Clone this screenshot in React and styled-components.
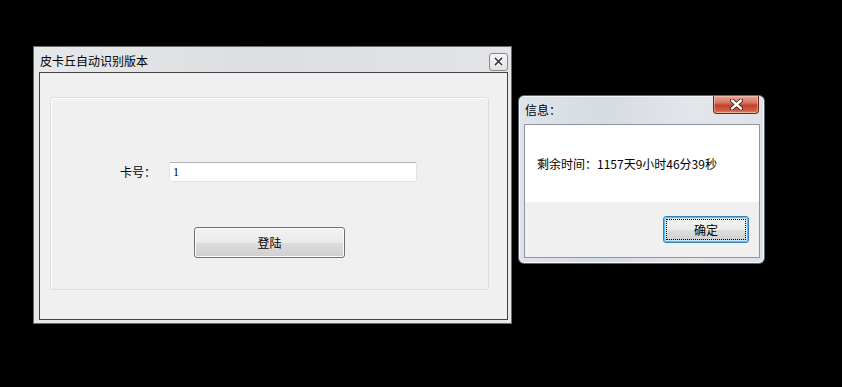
import React from "react";
import styled, { createGlobalStyle } from "styled-components";

const Global = createGlobalStyle`
  html, body { margin: 0; padding: 0; background: #000; }
  body { font-family: "Noto Sans CJK SC", "Noto Sans", sans-serif; font-size: 12px; color: #000; }
`;

const Desktop = styled.div`
  position: relative;
  width: 842px;
  height: 387px;
  background: #000;
  overflow: hidden;
`;

/* ---------- main window ---------- */
const MainWindow = styled.div`
  position: absolute;
  left: ${(p) => p.$x}px;
  top: ${(p) => p.$y}px;
  width: 479px;
  height: 278px;
  box-sizing: border-box;
  display: flex;
  flex-direction: column;
  border: 1px solid #6c6c6c;
  background: linear-gradient(to bottom, #e4e6e9 0px, #e8e9eb 26px, #e9e9e9 100%);
  padding: 0 3px 3px 5px;
`;

const MainTitleBar = styled.div`
  height: 25px;
  display: flex;
  align-items: center;
  justify-content: space-between;
  padding: 2px 0 0 1px;
  box-sizing: border-box;
  background: linear-gradient(to right, #e6e8ea 0%, #dcdee1 45%, #e2e4e7 100%);
  margin: 0 -3px 0 -5px;
  padding-left: 6px;
  padding-right: 3px;
`;

const TitleText = styled.span`
  font-size: 12px;
  line-height: 16px;
  color: #000;
`;

const SmallClose = styled.div`
  width: 19px;
  height: 18px;
  box-sizing: border-box;
  border: 1px solid #8a8a8a;
  border-radius: 3px;
  background: linear-gradient(to bottom, #f5f5f5, #e4e4e4);
  display: flex;
  align-items: center;
  justify-content: center;
  margin-top: 2px;
`;

const MainClient = styled.div`
  flex: 1;
  border: 1px solid #444;
  background: #f0f0f0;
  padding: 24px 18px 29px 10px;
  display: flex;
`;

const GroupBox = styled.div`
  flex: 1;
  border: 1px solid #d6dfe7;
  border-radius: 3px;
  box-shadow: inset 1px 1px 0 #ffffff;
  padding: 64px 0 0 69px;
  display: flex;
  flex-direction: column;
`;

const FieldRow = styled.div`
  display: flex;
  align-items: center;
  height: 20px;
`;

const FieldLabel = styled.span`
  width: 49px;
  font-size: 12px;
  line-height: 16px;
`;

const TextInput = styled.div`
  width: 248px;
  height: 20px;
  box-sizing: border-box;
  background: #fff;
  border: 1px solid #dfe3e8;
  border-top-color: #abadb3;
  border-radius: 2px;
  padding-left: 3px;
  font-family: "Liberation Serif", serif;
  font-size: 12px;
  line-height: 18px;
`;

const PushButton = styled.div`
  width: 151px;
  height: 31px;
  margin: 45px 0 0 74px;
  box-sizing: border-box;
  border: 1px solid #707070;
  border-radius: 3px;
  background: linear-gradient(to bottom, #f2f2f2 0%, #ebebeb 50%, #dddddd 51%, #cfcfcf 100%);
  box-shadow: inset 0 0 0 1px #fcfcfc;
  display: flex;
  align-items: center;
  justify-content: center;
  font-size: 12px;
`;

/* ---------- message dialog ---------- */
const Dialog = styled.div`
  position: absolute;
  left: ${(p) => p.$x}px;
  top: ${(p) => p.$y}px;
  width: 247px;
  height: 169px;
  box-sizing: border-box;
  display: flex;
  flex-direction: column;
  border: 1px solid #5c6570;
  border-radius: 6px;
  background: linear-gradient(to right, #dfe4ea 0%, #d5dbe2 35%, #e2e6eb 70%, #dde2e8 100%);
  box-shadow: inset 0 0 0 1px #f4f6f8;
  padding: 0 4px 5px 5px;
`;

const DialogTitleBar = styled.div`
  height: 28px;
  display: flex;
  align-items: flex-start;
  justify-content: space-between;
  padding: 0 1px 0 1px;
`;

const DialogTitle = styled.span`
  padding-top: 6px;
  font-size: 12px;
  line-height: 16px;
`;

const RedClose = styled.div`
  width: 46px;
  height: 18px;
  box-sizing: border-box;
  border: 1px solid #6b2a20;
  border-top: none;
  border-radius: 0 0 4px 4px;
  background: linear-gradient(to bottom, #e7a595 0%, #d7755f 40%, #c2412b 55%, #cf5d47 85%, #e08c72 100%);
  box-shadow: inset 0 0 0 1px rgba(255, 220, 210, 0.45);
  display: flex;
  align-items: center;
  justify-content: center;
`;

const DialogClient = styled.div`
  flex: 1;
  border: 1px solid #8d949c;
  display: flex;
  flex-direction: column;
  background: #f0f0f0;
`;

const MessageArea = styled.div`
  height: 77px;
  background: #fff;
  display: flex;
  align-items: center;
  padding-left: 12px;
  font-size: 12px;
`;

const ButtonArea = styled.div`
  flex: 1;
  display: flex;
  align-items: center;
  justify-content: flex-end;
  padding-right: 10px;
`;

const DefaultButton = styled.div`
  position: relative;
  width: 86px;
  height: 27px;
  box-sizing: border-box;
  border: 1px solid #3c7fb1;
  border-radius: 3px;
  background: linear-gradient(to bottom, #eaf6fd 0%, #d9f0fc 50%, #d6d6d6 51%, #cdcdcd 100%);
  background: linear-gradient(to bottom, #f2f2f2 0%, #ebebeb 50%, #dddddd 51%, #cfcfcf 100%);
  box-shadow: inset 0 0 0 1px #48c6f5, inset 0 0 0 2px #c4e8fa;
  display: flex;
  align-items: center;
  justify-content: center;
  font-size: 12px;

  &::after {
    content: "";
    position: absolute;
    inset: 2px;
    border: 1px dotted #000;
  }
`;

const SmallX = () => (
  <svg width="9" height="9" viewBox="0 0 9 9">
    <path d="M1.5 1.5 L7.5 7.5 M7.5 1.5 L1.5 7.5" stroke="#fff" strokeWidth="3.4" strokeLinecap="square" />
    <path d="M1.5 1.5 L7.5 7.5 M7.5 1.5 L1.5 7.5" stroke="#3a3a3a" strokeWidth="1.6" strokeLinecap="square" />
  </svg>
);

const BigX = () => (
  <svg width="13" height="11" viewBox="0 0 13 11">
    <path d="M2 1.5 L11 9.5 M11 1.5 L2 9.5" stroke="#3b1a14" strokeWidth="4.2" strokeLinecap="round" />
    <path d="M2 1.5 L11 9.5 M11 1.5 L2 9.5" stroke="#ffffff" strokeWidth="2.4" strokeLinecap="round" />
  </svg>
);

export default function App() {
  return (
    <>
      <Global />
      <Desktop>
        <MainWindow $x={33} $y={46}>
          <MainTitleBar>
            <TitleText>皮卡丘自动识别版本</TitleText>
            <SmallClose>
              <SmallX />
            </SmallClose>
          </MainTitleBar>
          <MainClient>
            <GroupBox>
              <FieldRow>
                <FieldLabel>卡号：</FieldLabel>
                <TextInput>1</TextInput>
              </FieldRow>
              <PushButton>登陆</PushButton>
            </GroupBox>
          </MainClient>
        </MainWindow>

        <Dialog $x={518} $y={95}>
          <DialogTitleBar>
            <DialogTitle>信息：</DialogTitle>
            <RedClose>
              <BigX />
            </RedClose>
          </DialogTitleBar>
          <DialogClient>
            <MessageArea>剩余时间：1157天9小时46分39秒</MessageArea>
            <ButtonArea>
              <DefaultButton>确定</DefaultButton>
            </ButtonArea>
          </DialogClient>
        </Dialog>
      </Desktop>
    </>
  );
}
